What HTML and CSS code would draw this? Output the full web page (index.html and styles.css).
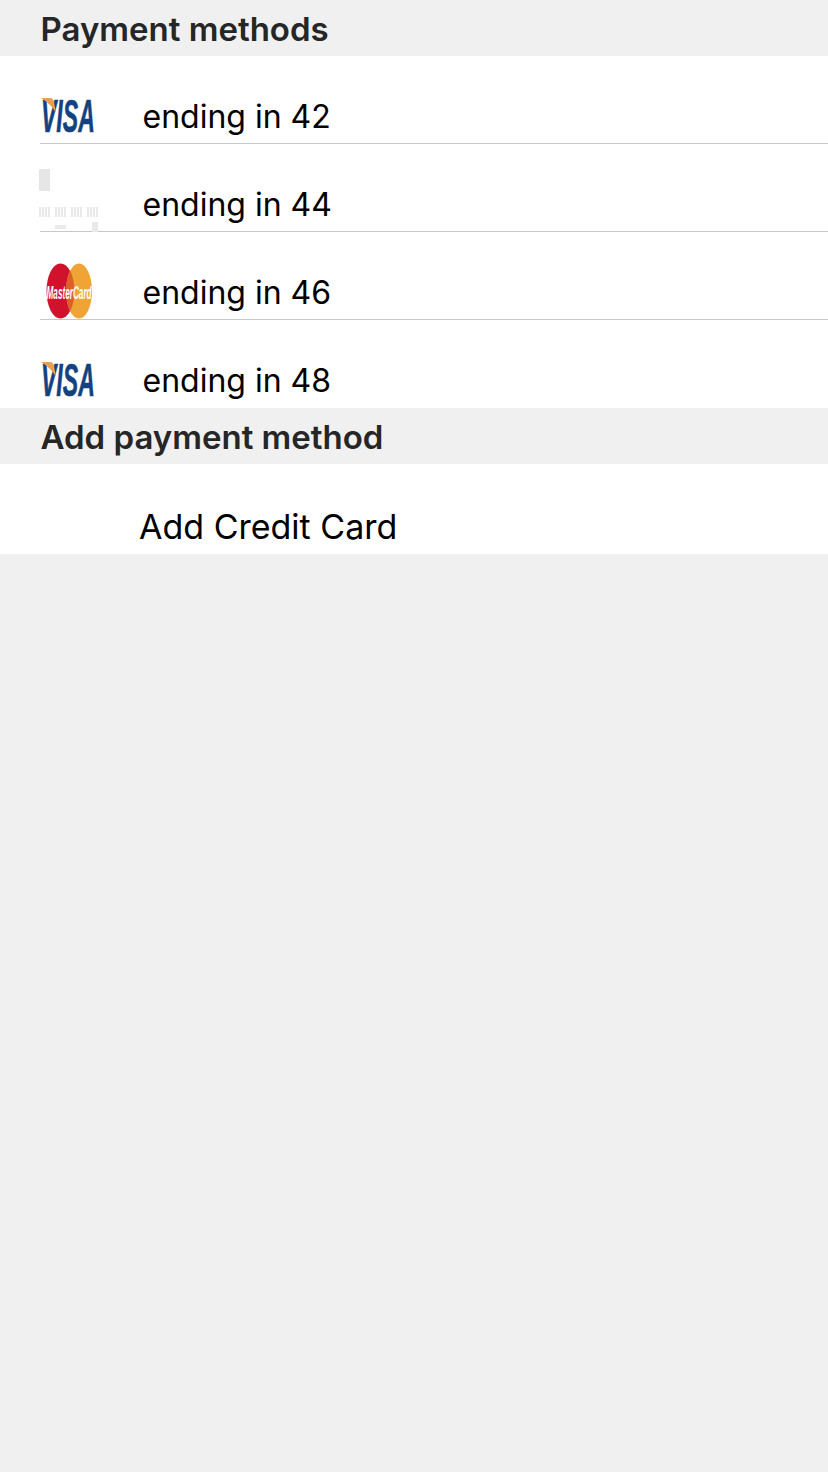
FILE: index.html
```html
<!DOCTYPE html>
<html lang="en">
<head>
<meta charset="UTF-8">
<meta name="viewport" content="width=device-width, initial-scale=1.0">
<title>Payment methods</title>
<link rel="stylesheet" href="styles.css">
</head>
<body>
<div class="section-header">Payment methods</div>
<div class="card-list">
  <div class="card-row">
    <svg class="card-icon" viewBox="0 0 60 64" width="60" height="64">
      <text class="visa-text" transform="translate(2 52) scale(.96 1.95)">VISA</text>
      <path d="M2 18 L11 18 Q14 18 15 22 L17 33 Q12 24 2 18 Z" fill="#e8a04a"/>
    </svg>
    <span class="card-label">ending in 42</span>
  </div>
  <div class="card-row">
    <svg class="card-icon" viewBox="0 0 60 64" width="60" height="64">
      <rect x="0" y="1" width="11" height="22" fill="#e6e6e6"/>
      <g fill="#e9e9e9">
        <rect x="0" y="39" width="2" height="10"/><rect x="3" y="39" width="2" height="10"/><rect x="6" y="39" width="2" height="10"/><rect x="9" y="39" width="2" height="10"/>
        <rect x="16" y="39" width="2" height="10"/><rect x="19" y="39" width="2" height="10"/><rect x="22" y="39" width="2" height="10"/><rect x="25" y="39" width="2" height="10"/>
        <rect x="32" y="39" width="2" height="10"/><rect x="35" y="39" width="2" height="10"/><rect x="38" y="39" width="2" height="10"/><rect x="41" y="39" width="2" height="10"/>
        <rect x="48" y="39" width="2" height="10"/><rect x="51" y="39" width="2" height="10"/><rect x="54" y="39" width="2" height="10"/><rect x="57" y="39" width="2" height="10"/>
        <rect x="16" y="57" width="11" height="4"/>
        <rect x="53" y="54" width="6" height="10"/>
      </g>
    </svg>
    <span class="card-label">ending in 44</span>
  </div>
  <div class="card-row">
    <svg class="card-icon" viewBox="0 0 60 64" width="60" height="64">
      <ellipse cx="21.5" cy="35" rx="14" ry="27.5" fill="#d0122c"/>
      <ellipse cx="40" cy="35" rx="13" ry="27.5" fill="#f0a435"/>
      <path d="M31 14 Q35.5 24 35.5 35 Q35.5 46 31 56 Q27 46 27 35 Q27 24 31 14 Z" fill="#dd5f2a"/>
      <text class="mc-text" transform="translate(7.5 43) scale(1 2.3)">MasterCard</text>
    </svg>
    <span class="card-label">ending in 46</span>
  </div>
  <div class="card-row">
    <svg class="card-icon" viewBox="0 0 60 64" width="60" height="64">
      <text class="visa-text" transform="translate(2 52) scale(.96 1.95)">VISA</text>
      <path d="M2 18 L11 18 Q14 18 15 22 L17 33 Q12 24 2 18 Z" fill="#e8a04a"/>
    </svg>
    <span class="card-label">ending in 48</span>
  </div>
</div>
<div class="section-header">Add payment method</div>
<div class="add-row">Add Credit Card</div>
</body>
</html>
```

FILE: styles.css
```css
body {
  margin: 0;
  background-color: #f0f0f0;
  font-family: Inter, "Noto Sans", sans-serif;
  color: #000;
}
.section-header {
  height: 56px;
  padding-left: 40.5px;
  font-size: 33px;
  font-weight: 590;
  line-height: 58px;
  color: #262626;
}
.card-list {
  background-color: #fff;
}
.card-row {
  display: flex;
  align-items: flex-end;
  height: 88px;
  margin-left: 40px;
  box-sizing: border-box;
  border-bottom: 1px solid #c8c8c8;
}
.card-row:last-child {
  border-bottom-color: transparent;
}
.card-icon {
  flex: none;
  margin-left: -1px;
  margin-bottom: -1px;
}
.card-label {
  margin-left: 43.5px;
  padding-bottom: 6px;
  font-size: 32px;
  line-height: 40px;
}
.visa-text {
  font-family: "Liberation Sans", sans-serif;
  font-size: 24px;
  font-weight: 700;
  font-style: italic;
  fill: #12427f;
  stroke: #12427f;
  stroke-width: 0.3px;
}
.mc-text {
  font-family: "Liberation Sans", sans-serif;
  font-size: 8.2px;
  font-weight: 700;
  font-style: italic;
  fill: #fff;
}
.add-row {
  height: 90px;
  padding-left: 139px;
  padding-top: 43px;
  box-sizing: border-box;
  background-color: #fff;
  font-size: 34px;
  line-height: 40px;
}
```
